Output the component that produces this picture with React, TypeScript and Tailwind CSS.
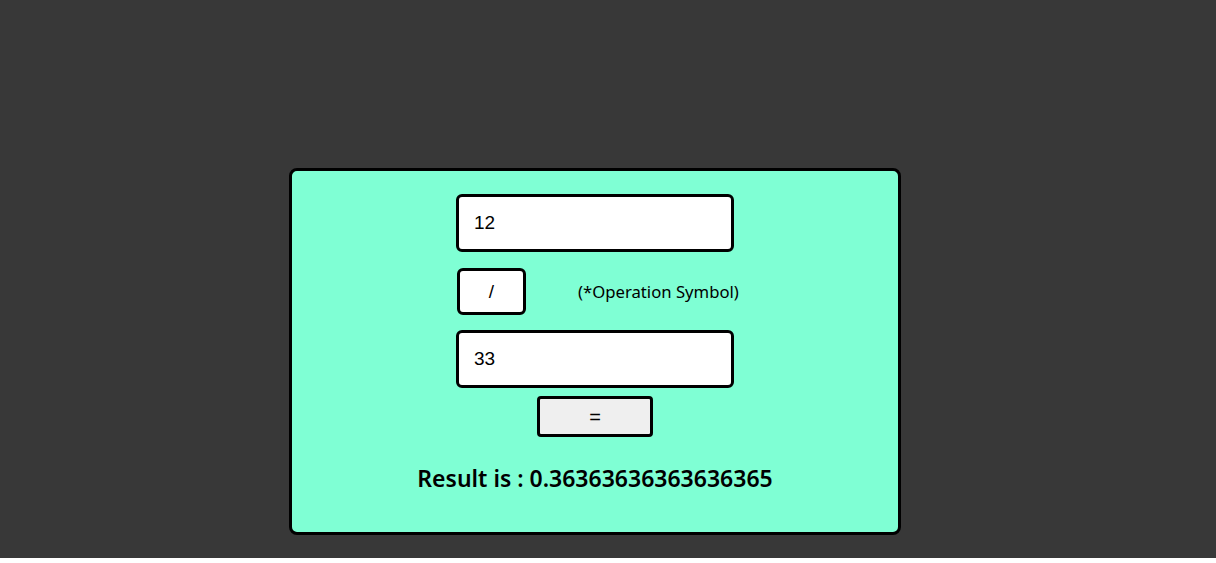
export default function App() {
  return (
    <div className="h-[558px] bg-[#383838] pt-[168px] pl-[289px]">
      <div className="w-[612px] h-[367px] rounded-lg border-[3px] border-black bg-[#7fffd4] flex flex-col items-center pt-[23px]">
        <input
          defaultValue="12"
          className="w-[278px] h-[58px] rounded-md border-[3px] border-black bg-white pl-[15px] font-['Liberation_Sans',Arial,sans-serif] text-[19px] text-black outline-none"
        />

        <div className="w-[278px] flex items-center mt-4">
          <input
            defaultValue="/"
            className="ml-[1px] w-[69px] h-[47px] shrink-0 rounded-md border-[3px] border-black bg-white text-center font-['Liberation_Sans',Arial,sans-serif] text-[19px] text-black outline-none"
          />
          <span className="ml-[52px] whitespace-nowrap font-['Noto_Sans',sans-serif] text-[16.7px] text-black">
            (*Operation Symbol)
          </span>
        </div>

        <input
          defaultValue="33"
          className="mt-[15px] w-[278px] h-[58px] rounded-md border-[3px] border-black bg-white pl-[15px] font-['Liberation_Sans',Arial,sans-serif] text-[19px] text-black outline-none"
        />

        <button className="mt-2 w-[116px] h-[41px] rounded border-[3px] border-black bg-[#efefef] font-['Liberation_Sans',Arial,sans-serif] text-[20px] font-medium text-black">
          =
        </button>

        <p className="mt-[27px] font-['Noto_Sans',sans-serif] text-[23px] font-semibold leading-7 text-black">
          Result is : 0.36363636363636365
        </p>
      </div>
    </div>
  );
}
